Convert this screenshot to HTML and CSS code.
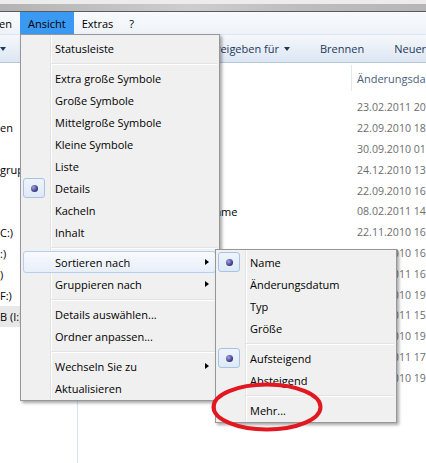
FILE: index.html
```html
<!DOCTYPE html>
<html lang="de">
<head>
    <meta charset="UTF-8">
    <meta name="viewport" content="width=device-width, initial-scale=1.0">
    <title>Explorer - Ansicht</title>
    <link rel="stylesheet" href="styles.css">
</head>
<body>
    <div class="window">
        <div class="titlebar"></div>
        <div class="frame-edge"></div>

        <div class="menubar">
            <div class="clip-end">
                <span class="menubar-item">Datei</span>
                <span class="menubar-item">Bearbeiten</span>
            </div>
            <span class="menubar-item active">Ansicht</span>
            <span class="menubar-item">Extras</span>
            <span class="menubar-item">?</span>
        </div>

        <div class="toolbar">
            <div class="clip-end">
                <span class="tool tool-first">Organisieren <span class="drop"></span></span>
                <span class="tool">In Bibliothek aufnehmen <span class="drop"></span></span>
                <span class="tool">Freigeben für <span class="drop"></span></span>
            </div>
            <span class="tool">Brennen</span>
            <span class="tool">Neuer Ordner</span>
        </div>

        <div class="content">
            <!-- nav pane is scrolled sideways, only the line ends show -->
            <div class="navpane">
                <div class="nav-row">en</div>
                <div class="nav-row"></div>
                <div class="nav-row">gruppe</div>
                <div class="nav-row"></div>
                <div class="nav-row"></div>
                <div class="nav-row">C:)</div>
                <div class="nav-row">:)</div>
                <div class="nav-row">)</div>
                <div class="nav-row">F:)</div>
                <div class="nav-row selected">B (I:)</div>
            </div>

            <div class="filelist">
                <div class="file-header">
                    <span class="col-name">Name</span>
                    <span class="col-date">Änderungsdatum</span>
                </div>
                <div class="file-rows">
                    <div class="file-row"><span class="col-name">Adobe</span><span class="col-date">23.02.2011 20:31</span></div>
                    <div class="file-row"><span class="col-name">Audacity</span><span class="col-date">22.09.2010 18:02</span></div>
                    <div class="file-row"><span class="col-name">CCleaner</span><span class="col-date">30.09.2010 01:15</span></div>
                    <div class="file-row"><span class="col-name">Common Files</span><span class="col-date">24.12.2010 13:47</span></div>
                    <div class="file-row"><span class="col-name">DVD Maker</span><span class="col-date">22.09.2010 16:20</span></div>
                    <div class="file-row"><span class="col-name">Gemeinsame Programme</span><span class="col-date">08.02.2011 14:09</span></div>
                    <div class="file-row"><span class="col-name">Google</span><span class="col-date">22.11.2010 16:33</span></div>
                    <div class="file-row"><span class="col-name">Internet Explorer</span><span class="col-date">22.09.2010 16:21</span></div>
                    <div class="file-row"><span class="col-name">Java</span><span class="col-date">14.01.2011 16:52</span></div>
                    <div class="file-row"><span class="col-name">Microsoft Games</span><span class="col-date">05.10.2010 19:40</span></div>
                    <div class="file-row"><span class="col-name">Mozilla Firefox</span><span class="col-date">17.02.2011 15:05</span></div>
                    <div class="file-row"><span class="col-name">MSBuild</span><span class="col-date">12.10.2010 19:22</span></div>
                    <div class="file-row"><span class="col-name">Skype</span><span class="col-date">21.02.2011 17:36</span></div>
                    <div class="file-row"><span class="col-name">VideoLAN</span><span class="col-date">28.10.2010 19:11</span></div>
                </div>
            </div>
        </div>
    </div>

    <!-- Ansicht dropdown -->
    <div class="menu view-menu">
        <div class="menu-item"><span></span><span></span><span>Statusleiste</span></div>
        <div class="menu-sep"></div>
        <div class="menu-item"><span></span><span></span><span>Extra große Symbole</span></div>
        <div class="menu-item"><span></span><span></span><span>Große Symbole</span></div>
        <div class="menu-item"><span></span><span></span><span>Mittelgroße Symbole</span></div>
        <div class="menu-item"><span></span><span></span><span>Kleine Symbole</span></div>
        <div class="menu-item"><span></span><span></span><span>Liste</span></div>
        <div class="menu-item"><span class="check"></span><span></span><span>Details</span></div>
        <div class="menu-item"><span></span><span></span><span>Kacheln</span></div>
        <div class="menu-item"><span></span><span></span><span>Inhalt</span></div>
        <div class="menu-sep"></div>
        <div class="menu-item hot"><span></span><span></span><span>Sortieren nach</span><span class="arrow"></span></div>
        <div class="menu-item"><span></span><span></span><span>Gruppieren nach</span><span class="arrow"></span></div>
        <div class="menu-sep"></div>
        <div class="menu-item"><span></span><span></span><span>Details auswählen...</span></div>
        <div class="menu-item"><span></span><span></span><span>Ordner anpassen...</span></div>
        <div class="menu-sep"></div>
        <div class="menu-item"><span></span><span></span><span>Wechseln Sie zu</span><span class="arrow"></span></div>
        <div class="menu-item"><span></span><span></span><span>Aktualisieren</span></div>
    </div>

    <!-- Sortieren nach submenu -->
    <div class="menu sort-menu">
        <div class="menu-item"><span class="check"></span><span></span><span>Name</span></div>
        <div class="menu-item"><span></span><span></span><span>Änderungsdatum</span></div>
        <div class="menu-item"><span></span><span></span><span>Typ</span></div>
        <div class="menu-item"><span></span><span></span><span>Größe</span></div>
        <div class="menu-sep"></div>
        <div class="menu-item"><span class="check"></span><span></span><span>Aufsteigend</span></div>
        <div class="menu-item"><span></span><span></span><span>Absteigend</span></div>
        <div class="menu-sep"></div>
        <div class="menu-item"><span></span><span></span><span>Mehr...</span></div>
    </div>

    <!-- red marker ring round "Mehr..." -->
    <svg class="marker" width="135" height="70" viewBox="0 0 135 70">
        <ellipse cx="67" cy="35" rx="53.5" ry="22.5" fill="none" stroke="#e3171f" stroke-width="4"/>
    </svg>
</body>
</html>
```

FILE: styles.css
```css
* {
    box-sizing: border-box;
}
body {
    margin: 0;
    width: 426px;
    height: 463px;
    overflow: hidden;
    position: relative;
    background: #fff;
    font-family: "Open Sans", "Noto Sans", sans-serif;
    font-size: 11px;
    color: #000;
}
.window {
    display: flex;
    flex-direction: column;
    height: 100%;
}
.titlebar {
    height: 4px;
    background: #ececec;
}
.frame-edge {
    height: 8px;
    background: linear-gradient(to right, #b3b3b3, #cdcdcd 45%, #bdbdbd 70%, #b6b6b6);
    border-bottom: 1px solid #5b5b5b;
}

/* keeps the end of an overflowing row visible */
.clip-end {
    display: flex;
    justify-content: flex-end;
    overflow: hidden;
    flex: none;
    white-space: nowrap;
}

.menubar {
    height: 22px;
    display: flex;
    background: linear-gradient(#f8fafd, #eef3f9);
}
.menubar .clip-end {
    width: 20px;
}
.menubar-item {
    display: flex;
    align-items: center;
    padding: 0 8px;
    white-space: nowrap;
}
.menubar-item.active {
    background: #3a99f2;
}

.toolbar {
    height: 29px;
    display: flex;
    background: linear-gradient(#f5f8fc, #e9eff7 50%, #dce6f3);
    border-top: 1px solid #dde5ef;
    border-bottom: 1px solid #b6c6d9;
    color: #1e395b;
}
.toolbar .clip-end {
    width: 305px;
}
.tool {
    display: flex;
    align-items: center;
    padding: 0 15px;
    white-space: nowrap;
}
.tool-first {
    padding-right: 22px;
}
.drop {
    width: 0;
    height: 0;
    margin-left: 5px;
    border-top: 4px solid #1e395b;
    border-left: 3.5px solid transparent;
    border-right: 3.5px solid transparent;
}

.content {
    flex: 1;
    display: flex;
    min-height: 0;
}
.navpane {
    width: 78px;
    flex: none;
    padding-top: 54px;
    border-right: 1px solid #d5e3f2;
}
.nav-row {
    height: 21px;
    line-height: 21px;
    white-space: nowrap;
    overflow: hidden;
}
.nav-row.selected {
    background: #e8e8e8;
}

.filelist {
    flex: 1;
    white-space: nowrap;
}
.file-header {
    height: 30px;
    display: flex;
    align-items: center;
    color: #4c607a;
}
.file-header .col-date {
    height: 26px;
    display: flex;
    align-items: center;
    padding-left: 5px;
    border-left: 1px solid #e3e8ee;
}
.file-rows {
    padding-top: 4px;
}
.file-row {
    height: 20.8px;
    display: flex;
    align-items: center;
}
.col-name {
    width: 273px;
    flex: none;
    padding-left: 28px;
}
.col-date {
    padding-left: 6px;
}
.file-row .col-date {
    color: #6d6d6d;
    font-size: 10.6px;
}

/* drop-down menus */
.menu {
    position: absolute;
    border: 1px solid #979797;
    background-color: #f0f0f0;
    background-image: linear-gradient(to right, transparent 29px, #e2e3e3 29px, #e2e3e3 30px, #fff 30px, #fff 31px, transparent 31px);
    box-shadow: 2px 2px 3px rgba(0, 0, 0, 0.35);
    white-space: nowrap;
}
.view-menu {
    left: 20px;
    top: 34px;
    width: 200px;
    padding: 2px 0 1px;
}
.sort-menu {
    left: 215px;
    top: 249px;
    width: 182px;
    padding: 1px 0;
}
.menu-item {
    height: 22px;
    display: grid;
    grid-template-columns: 20px 11px 1fr 16px;
    align-items: center;
    margin: 0 3px 0 2px;
    border: 1px solid transparent;
    border-radius: 3px;
}
.menu-item.hot {
    border-color: #b5cff0;
    background: linear-gradient(#f8fafe, #e8eff9);
}
.menu-sep {
    height: 8px;
    margin: 0 2px 0 30px;
    background: linear-gradient(transparent 4px, #e2e3e3 4px, #e2e3e3 5px, #fff 5px, #fff 6px, transparent 6px);
}
.check {
    width: 22px;
    height: 20px;
    margin-left: -1px;
    display: flex;
    align-items: center;
    justify-content: center;
    border: 1px solid #a6c2e6;
    border-radius: 3px;
    background: linear-gradient(#eef4fc, #dfe9f7);
}
.check::after {
    content: "";
    width: 7px;
    height: 7px;
    border-radius: 50%;
    background: radial-gradient(circle at 35% 35%, #a0a0e4, #34347f 70%);
}
.arrow {
    justify-self: center;
    width: 0;
    height: 0;
    border-left: 4px solid #000;
    border-top: 3.5px solid transparent;
    border-bottom: 3.5px solid transparent;
}

.marker {
    position: absolute;
    left: 200px;
    top: 372px;
}
```
